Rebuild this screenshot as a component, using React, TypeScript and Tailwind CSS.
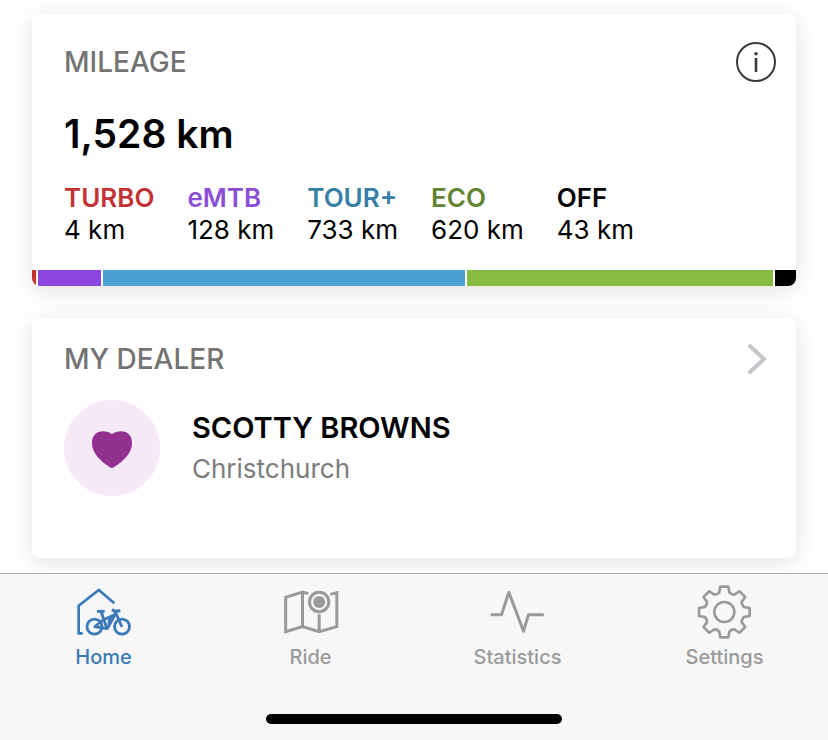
import type { ReactNode } from 'react';

interface Mode {
  name: string;
  km: number;
  text: string;
  bar: string;
}

const modes: Mode[] = [
  { name: 'TURBO', km: 4, text: 'text-[#c43236]', bar: 'bg-[#c5322f]' },
  { name: 'eMTB', km: 128, text: 'text-[#8a4fd6]', bar: 'bg-[#8b45e0]' },
  { name: 'TOUR+', km: 733, text: 'text-[#367fa5]', bar: 'bg-[#4aa1d2]' },
  { name: 'ECO', km: 620, text: 'text-[#5f8432]', bar: 'bg-[#88bb42]' },
  { name: 'OFF', km: 43, text: 'text-black', bar: 'bg-black' },
];

function Icon({ children }: { children: ReactNode }) {
  return (
    <svg
      className="size-14"
      viewBox="1 0 168 168"
      fill="none"
      stroke="currentColor"
      strokeWidth="9"
      aria-hidden="true"
    >
      {children}
    </svg>
  );
}

function HomeIcon() {
  return (
    <Icon>
      <path d="M21 148H9V65L69.5 18L116 58" strokeWidth="8" />
      <g strokeWidth="8.5">
        <circle cx="56.5" cy="128" r="22.5" />
        <circle cx="139" cy="128" r="22.5" />
        <path d="M64 82H87" />
        <path d="M76 82L94 134" />
        <path d="M109 77L118 82L134 80" strokeWidth="9" />
        <path d="M117 79L139 129" />
      </g>
      <path d="M57 128L82 108L119 91L95 134Z" strokeWidth="8" strokeLinejoin="round" />
      <path d="M98 105L118 94L97 130Z" fill="currentColor" strokeWidth="3" />
    </Icon>
  );
}

function RideIcon() {
  return (
    <Icon>
      <path d="M77 29L59.5 24L9 40V143L59.5 128L109.5 143L162.5 128V26L143 31" />
      <path d="M59.5 24V128M109.5 91V143" />
      <circle cx="109.5" cy="54" r="29" />
      <circle cx="109.5" cy="54" r="18" fill="currentColor" stroke="none" />
    </Icon>
  );
}

function StatisticsIcon() {
  return (
    <Icon>
      <path d="M2.5 92H35.5L57.5 25L101.5 142L116.5 92H162.5" strokeLinejoin="round" />
    </Icon>
  );
}

// One tooth every 45 degrees, joined by shallow curved valleys
function gearPath() {
  const at = (radius: number, degrees: number) => {
    const a = ((degrees - 90) * Math.PI) / 180;
    return `${(83 + radius * Math.cos(a)).toFixed(2)} ${(84 + radius * Math.sin(a)).toFixed(2)}`;
  };
  let d = '';
  for (let i = 0; i < 8; i++) {
    const c = i * 45;
    d += `${i === 0 ? 'M' : 'L'}${at(60, c - 15)}L${at(77, c - 9)}L${at(77, c + 9)}L${at(60, c + 15)}`;
    d += `Q${at(56, c + 22.5)} ${at(60, c + 30)}`;
  }
  return `${d}Z`;
}

function SettingsIcon() {
  return (
    <Icon>
      <path d={gearPath()} strokeWidth="8" strokeLinejoin="round" />
      <circle cx="83" cy="84" r="30" strokeWidth="8" />
    </Icon>
  );
}

const tabs = [
  { label: 'Home', icon: <HomeIcon />, active: true },
  { label: 'Ride', icon: <RideIcon />, active: false },
  { label: 'Statistics', icon: <StatisticsIcon />, active: false },
  { label: 'Settings', icon: <SettingsIcon />, active: false },
];

function MileageCard() {
  const total = modes.reduce((sum, mode) => sum + mode.km, 0);

  return (
    <section className="overflow-hidden rounded-lg bg-white shadow-[0_4px_24px_rgba(0,0,0,0.12)]">
      <div className="flex items-center justify-between pt-7 pr-5 pl-8">
        <h2 className="text-[28px] leading-10 font-medium text-[#737373]">MILEAGE</h2>
        <button type="button" aria-label="Mileage info" className="text-[#3a3a3a]">
          <svg className="size-10" viewBox="0 0 40 40" fill="none" aria-hidden="true">
            <circle cx="20" cy="20" r="19" stroke="currentColor" strokeWidth="2" />
            <circle cx="20" cy="11.7" r="1.8" fill="currentColor" />
            <path d="M20 16V30" stroke="currentColor" strokeWidth="2.6" />
          </svg>
        </button>
      </div>
      <p className="mt-7 px-8 text-[39px] leading-12 font-semibold">
        {total.toLocaleString('en-US')} km
      </p>
      <dl className="mt-6 flex gap-[33px] px-8 text-[26px] leading-8">
        {modes.map((mode) => (
          <div key={mode.name}>
            <dt className={`font-semibold ${mode.text}`}>{mode.name}</dt>
            <dd>{mode.km} km</dd>
          </div>
        ))}
      </dl>
      <div className="mt-6 flex h-4 gap-0.5">
        {modes.map((mode) => (
          <div
            key={mode.name}
            className={`min-w-1 basis-0 ${mode.bar}`}
            style={{ flexGrow: mode.km }}
          />
        ))}
      </div>
    </section>
  );
}

function DealerCard() {
  return (
    <section className="rounded-lg bg-white pt-[25px] pb-[62px] pl-8 shadow-[0_4px_24px_rgba(0,0,0,0.12)]">
      <div className="flex items-center justify-between pr-7">
        <h2 className="text-[28px] leading-8 font-medium text-[#737373]">MY DEALER</h2>
        <a href="#dealer" aria-label="Open dealer" className="text-[#c3c7cb]">
          <svg className="h-8 w-6" viewBox="0 0 24 32" fill="none" aria-hidden="true">
            <path
              d="M6 3L20 16L6 29"
              stroke="currentColor"
              strokeWidth="4"
              strokeLinecap="round"
            />
          </svg>
        </a>
      </div>
      <div className="mt-[25px] flex items-center gap-8">
        <div className="flex size-24 shrink-0 items-center justify-center rounded-full bg-[#f5e9f6]">
          <svg className="size-12" viewBox="0 0 144 144" fill="#92308f" aria-hidden="true">
            <path d="M72 132C68 132 12 100 12 57C12 35 26 22 44 22C56 22 66 25 72 31C78 25 88 22 100 22C118 22 132 35 132 57C132 100 76 132 72 132Z" />
          </svg>
        </div>
        <div>
          <h3 className="text-[29px] leading-[42px] font-semibold">SCOTTY BROWNS</h3>
          <p className="text-[26px] leading-10 text-[#7c7c7c]">Christchurch</p>
        </div>
      </div>
    </section>
  );
}

function TabBar() {
  return (
    <footer className="border-t border-[#acacac] bg-[#f7f7f7] pt-2.5 pb-4">
      <nav className="grid grid-cols-4">
        {tabs.map((tab) => (
          <a
            key={tab.label}
            href={`#${tab.label.toLowerCase()}`}
            aria-current={tab.active ? 'page' : undefined}
            className={`flex flex-col items-center ${tab.active ? 'text-[#3a7ab8]' : 'text-[#9a9a9a]'}`}
          >
            {tab.icon}
            <span className="mt-1 text-xl leading-[26px] font-medium">{tab.label}</span>
          </a>
        ))}
      </nav>
      <div className="mx-auto mt-11 h-2.5 w-[296px] rounded-full bg-black" />
    </footer>
  );
}

export default function App() {
  return (
    <div className="flex min-h-screen flex-col bg-white font-['Inter',sans-serif] text-black">
      <main className="flex flex-1 flex-col gap-8 px-8 pt-3.5 pb-[15px]">
        <MileageCard />
        <DealerCard />
      </main>
      <TabBar />
    </div>
  );
}
